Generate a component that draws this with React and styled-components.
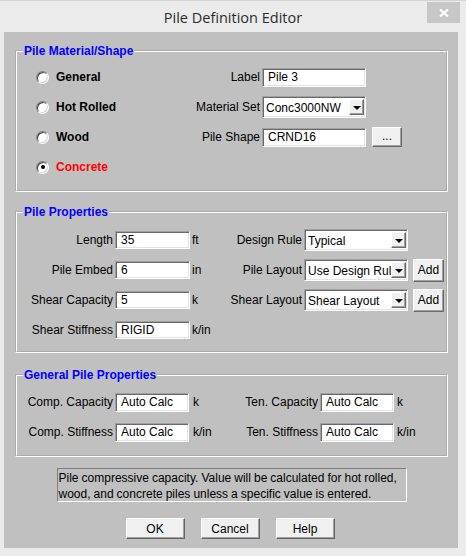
import React from 'react';
import styled, { createGlobalStyle } from 'styled-components';

const Global = createGlobalStyle`
  html, body { margin: 0; padding: 0; background: #ebebeb; }
  body { font-family: "Liberation Sans", Arial, sans-serif; font-size: 12px; color: #000; }
  * { box-sizing: border-box; }
`;

const Window = styled.div`
  width: 466px;
  height: 556px;
  background: #ebebeb;
  border-top: 1px solid #d4d4d4;
  display: flex;
  flex-direction: column;
`;

const TitleBar = styled.div`
  height: 31px;
  flex: none;
  display: grid;
  grid-template-columns: 1fr auto 1fr;
  align-items: center;
`;

const Title = styled.div`
  grid-column: 2;
  font-family: "Open Sans", "Noto Sans", sans-serif;
  font-size: 14.5px;
  color: #2b2b2b;
  padding-top: 1px;
`;

const CloseButton = styled.div`
  grid-column: 3;
  justify-self: end;
  align-self: start;
  margin: 1px 6px 0 0;
  width: 33px;
  height: 21px;
  background: #c7c7c7;
  display: flex;
  align-items: center;
  justify-content: center;
`;

const Client = styled.div`
  flex: 1;
  margin: 0 8px 8px 4px;
  background: #c0c0c0;
  display: flex;
  flex-direction: column;
  padding: 12px 10px 0 11px;
`;

const Group = styled.fieldset`
  margin: ${p => p.$mt || 0}px 0 0 0;
  padding: 0;
  border: 2px groove #ffffff;
  min-width: 0;
`;

const Legend = styled.legend`
  color: #0000ff;
  font-weight: bold;
  font-size: 12px;
  line-height: 14px;
  padding: 0 1px;
  margin-left: 6px;
`;

const Grid = styled.div`
  display: grid;
  grid-template-columns: ${p => p.$cols};
  grid-auto-rows: 30px;
  align-items: center;
  padding: ${p => p.$pad};
`;

const RadioItem = styled.label`
  grid-column: 1;
  grid-row: ${p => p.$row};
  display: flex;
  align-items: center;
  gap: 7px;
  font-weight: bold;
  color: ${p => (p.$checked ? '#ff0000' : '#000')};
  white-space: nowrap;
`;

const RadioCircle = styled.span`
  width: 13px;
  height: 13px;
  border-radius: 50%;
  background: #fff;
  border: 1px solid;
  border-color: #808080 #ffffff #ffffff #808080;
  box-shadow: inset 1px 1px 0 #404040, inset -1px -1px 0 #d4d4d4;
  display: flex;
  align-items: center;
  justify-content: center;
  &::after {
    content: '';
    width: 4px;
    height: 4px;
    border-radius: 50%;
    background: ${p => (p.$checked ? '#000' : 'transparent')};
  }
`;

const FieldLabel = styled.div`
  grid-column: ${p => p.$col};
  grid-row: ${p => p.$row || 'auto'};
  text-align: right;
  padding-right: 2px;
  white-space: nowrap;
`;

const Unit = styled.div`
  grid-column: ${p => p.$col};
  padding-left: ${p => p.$pl || 2}px;
  white-space: nowrap;
`;

const sunken = `
  background: #fff;
  border: 1px solid;
  border-color: #a0a0a0 #ffffff #ffffff #a0a0a0;
  box-shadow: inset 1px 1px 0 #696969, inset -1px -1px 0 #e3e3e3;
`;

const TextBox = styled.div`
  grid-column: ${p => p.$col};
  grid-row: ${p => p.$row || 'auto'};
  height: ${p => p.$h || 19}px;
  width: 100%;
  ${sunken}
  padding-left: 5px;
  display: flex;
  align-items: center;
  white-space: nowrap;
  overflow: hidden;
`;

const Select = styled.div`
  grid-column: ${p => p.$col};
  grid-row: ${p => p.$row || 'auto'};
  height: 22px;
  width: 100%;
  ${sunken}
  padding: 2px 1px 2px 3px;
  display: flex;
  align-items: stretch;
`;

const SelectText = styled.div`
  flex: 1;
  min-width: 0;
  overflow: hidden;
  white-space: nowrap;
  display: flex;
  align-items: center;
  padding-top: 1px;
`;

const ArrowButton = styled.div`
  flex: none;
  width: 15px;
  background: #f0f0f0;
  border: 1px solid;
  border-color: #ffffff #696969 #696969 #ffffff;
  box-shadow: inset -1px -1px 0 #a0a0a0;
  display: flex;
  align-items: center;
  justify-content: center;
  &::after {
    content: '';
    border-left: 4px solid transparent;
    border-right: 4px solid transparent;
    border-top: 4px solid #000;
    margin-top: 1px;
  }
`;

const SmallButton = styled.div`
  grid-column: ${p => p.$col};
  grid-row: ${p => p.$row || 'auto'};
  justify-self: end;
  width: ${p => p.$w}px;
  height: ${p => p.$h}px;
  background: #f0f0f0;
  border: 1px solid;
  border-color: #ffffff #696969 #696969 #ffffff;
  box-shadow: inset -1px -1px 0 #a0a0a0;
  display: flex;
  align-items: center;
  justify-content: center;
  padding-bottom: ${p => p.$pb || 0}px;
`;

const InfoBox = styled.div`
  align-self: center;
  margin-top: 11px;
  width: 350px;
  height: 34px;
  border: 1px solid;
  border-color: #808080 #ffffff #ffffff #808080;
  padding: 1px 0 0 1px;
  line-height: 16px;
  white-space: nowrap;
  word-spacing: -0.3px;
`;

const ButtonRow = styled.div`
  display: flex;
  justify-content: center;
  gap: 16px;
  margin-top: 16px;
  padding-right: 3px;
`;

const PushButton = styled.div`
  width: 59px;
  height: 21px;
  background: #f0f0f0;
  border: 1px solid;
  border-color: #ffffff #646464 #646464 #ffffff;
  box-shadow: inset -1px -1px 0 #a0a0a0;
  display: flex;
  align-items: center;
  justify-content: center;
  font-size: 12px;
`;

const materials = ['General', 'Hot Rolled', 'Wood', 'Concrete'];

export default function App() {
  return (
    <>
      <Global />
      <Window>
        <TitleBar>
          <Title>Pile Definition Editor</Title>
          <CloseButton>
            <svg width="10" height="8" viewBox="0 0 10 8">
              <path d="M1 0.5 L9 7.5 M9 0.5 L1 7.5" stroke="#fff" strokeWidth="2.2" />
            </svg>
          </CloseButton>
        </TitleBar>
        <Client>
          <Group>
            <Legend>Pile Material/Shape</Legend>
            <Grid $cols="120px 106px 104px 36px" $pad="4px 0 8px 19px">
              {materials.map((m, i) => (
                <RadioItem key={m} $row={i + 1} $checked={m === 'Concrete'}>
                  <RadioCircle $checked={m === 'Concrete'} />
                  {m}
                </RadioItem>
              ))}
              <FieldLabel $col={2} $row={1}>Label</FieldLabel>
              <TextBox $col={3} $row={1}>Pile 3</TextBox>
              <FieldLabel $col={2} $row={2}>Material Set</FieldLabel>
              <Select $col={3} $row={2}>
                <SelectText>Conc3000NW</SelectText>
                <ArrowButton />
              </Select>
              <FieldLabel $col={2} $row={3}>Pile Shape</FieldLabel>
              <TextBox $col={3} $row={3}>CRND16</TextBox>
              <SmallButton $col={4} $row={3} $w={30} $h={20} $pb={2}>...</SmallButton>
            </Grid>
          </Group>

          <Group $mt={13}>
            <Legend>Pile Properties</Legend>
            <Grid $cols="98px 75px 40px 74px 104px 36px" $pad="6px 0 6px 0">
              <FieldLabel $col={1} $row={1}>Length</FieldLabel>
              <TextBox $col={2} $row={1} $h={18}>35</TextBox>
              <Unit $col={3}>ft</Unit>
              <FieldLabel $col={4} $row={1}>Design Rule</FieldLabel>
              <Select $col={5} $row={1}>
                <SelectText>Typical</SelectText>
                <ArrowButton />
              </Select>

              <FieldLabel $col={1} $row={2}>Pile Embed</FieldLabel>
              <TextBox $col={2} $row={2} $h={18}>6</TextBox>
              <Unit $col={3}>in</Unit>
              <FieldLabel $col={4} $row={2}>Pile Layout</FieldLabel>
              <Select $col={5} $row={2}>
                <SelectText>Use Design Rule</SelectText>
                <ArrowButton />
              </Select>
              <SmallButton $col={6} $row={2} $w={31} $h={23}>Add</SmallButton>

              <FieldLabel $col={1} $row={3}>Shear Capacity</FieldLabel>
              <TextBox $col={2} $row={3} $h={18}>5</TextBox>
              <Unit $col={3}>k</Unit>
              <FieldLabel $col={4} $row={3}>Shear Layout</FieldLabel>
              <Select $col={5} $row={3}>
                <SelectText>Shear Layout</SelectText>
                <ArrowButton />
              </Select>
              <SmallButton $col={6} $row={3} $w={31} $h={23}>Add</SmallButton>

              <FieldLabel $col={1} $row={4}>Shear Stiffness</FieldLabel>
              <TextBox $col={2} $row={4} $h={18}>RIGID</TextBox>
              <Unit $col={3}>k/in</Unit>
            </Grid>
          </Group>

          <Group $mt={15}>
            <Legend>General Pile Properties</Legend>
            <Grid $cols="98px 74px 56px 75px 74px 1fr" $pad="5px 0 8px 0">
              <FieldLabel $col={1} $row={1}>Comp. Capacity</FieldLabel>
              <TextBox $col={2} $row={1}>Auto Calc</TextBox>
              <Unit $col={3} $pl={4}>k</Unit>
              <FieldLabel $col={4} $row={1}>Ten. Capacity</FieldLabel>
              <TextBox $col={5} $row={1}>Auto Calc</TextBox>
              <Unit $col={6} $pl={3}>k</Unit>

              <FieldLabel $col={1} $row={2}>Comp. Stiffness</FieldLabel>
              <TextBox $col={2} $row={2}>Auto Calc</TextBox>
              <Unit $col={3} $pl={4}>k/in</Unit>
              <FieldLabel $col={4} $row={2}>Ten. Stiffness</FieldLabel>
              <TextBox $col={5} $row={2}>Auto Calc</TextBox>
              <Unit $col={6} $pl={3}>k/in</Unit>
            </Grid>
          </Group>

          <InfoBox>
            Pile compressive capacity. Value will be calculated for hot rolled,
            <br />
            wood, and concrete piles unless a specific value is entered.
          </InfoBox>

          <ButtonRow>
            <PushButton>OK</PushButton>
            <PushButton>Cancel</PushButton>
            <PushButton>Help</PushButton>
          </ButtonRow>
        </Client>
      </Window>
    </>
  );
}
